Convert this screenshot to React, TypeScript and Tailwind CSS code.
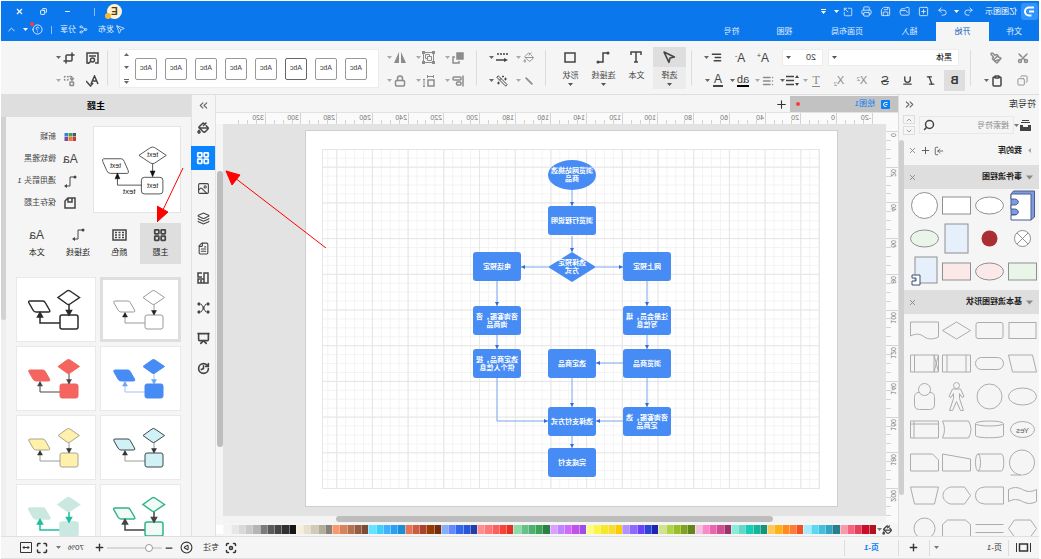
import React from 'react';
import {
  AlignLeft, AlignStartVertical, ChevronDown, ChevronUp, ChevronsLeft, ChevronsRight, CirclePlay, Clipboard,
  Copy, Crop, FileText, Focus, FolderOpen, HelpCircle, History, Image, Italic, Layers, LayoutGrid,
  List, Lock, LogIn, Maximize, Minus, Navigation, Paintbrush, PaintBucket, Plus, Presentation, Printer, Redo2,
  Replace, Save, Scissors, Search, Send, Share2, SquareArrowOutUpRight, SquarePlus, Underline, Undo2, Wand2, X,
} from 'lucide-react';

const swatches = [
  '#b0121f', '#cc0c2c', '#e83e5e', '#f46480', '#f79bab', '#24808f', '#35a5bf', '#3ec0de', '#5bd8f0', '#a5ecff',
  '#f65022', '#fc7d33', '#ff8d1d', '#feb318', '#ffc85a', '#13947f', '#14b59b', '#17ccb2', '#63d8c6', '#86eddb',
  '#a03068', '#cf5093', '#ea66ad', '#fb88cb', '#f2c2e0', '#62861a', '#7da321', '#9abf25', '#b2d247', '#d2e38f',
  '#1d25b5', '#2c42da', '#6b41fa', '#8e69fb', '#ae93fb', '#fccb00', '#fbdc2c', '#f4e828', '#faf546', '#fcfd86',
  '#9b4fe8', '#c450ea', '#cf6bfa', '#bd85ff', '#dba0ff', '#2c8044', '#3aa454', '#4cb074', '#66c088', '#8fdcab',
  '#e53124', '#fb4335', '#fb5f5f', '#fe7878', '#ff8f8f', '#1e3fa8', '#2a55d8', '#3068f0', '#6489ff', '#84aef8',
  '#762c06', '#963b04', '#a9432c', '#cf5c3e', '#e4775a', '#1a8ed8', '#2d9ef5', '#40b0ff', '#3cd0ff', '#66e4ff',
  '#7c4c34', '#965c42', '#b4724e', '#d9835a', '#f49a6c', '#8b7f77', '#b2ac9a', '#cfcbb8', '#e6e0cf', '#f5efdc',
  '#161616', '#303030', '#444444', '#5a5a5a', '#7b7b7b', '#b5b5b5', '#c9c9c9', '#d9d9d9', '#e7e7e7', '#f4f4f4', '#ffffff',
];

const nodes = [
  { text: '浏览行程说明', x: 241, y: 75 },
  { text: '网上预定', x: 166, y: 121 },
  { text: '电话预定', x: 316, y: 121 },
  { text: '注册会员，填写信息', x: 166, y: 175 },
  { text: '咨询客服，咨询商品', x: 316, y: 175 },
  { text: '浏览商品', x: 166, y: 218 },
  { text: '选定商品', x: 241, y: 218 },
  { text: '选定商品，提供个人信息', x: 316, y: 218 },
  { text: '咨询客服，选定商品', x: 166, y: 276 },
  { text: '选择支付方式', x: 241, y: 276 },
  { text: '完成支付', x: 241, y: 317 },
];

const edges = [
  'M265 59V75', 'M265 105V121', 'M241 136H214', 'M289 136H316', 'M190 150V175', 'M340 150V175', 'M190 204V218',
  'M340 204V218', 'M214 232H241', 'M190 247V276', 'M265 247V276', 'M214 290H241', 'M340 247V290H289', 'M265 305V317',
];

const themes = [
  { fill: '#ffffff', stroke: '#9a9a9a', line: '#9a9a9a', head: '#222222', width: 1 },
  { fill: '#ffffff', stroke: '#2b2b2b', line: '#2b2b2b', head: '#2b2b2b', width: 2 },
  { fill: '#478cf4', stroke: '#478cf4', line: '#a3c3f8', head: '#6ea3f5', width: 1 },
  { fill: '#f4655f', stroke: '#f4655f', line: '#444444', head: '#444444', width: 1 },
  { fill: '#d0f1f6', stroke: '#3d474a', line: '#9a9a9a', head: '#333333', width: 1 },
  { fill: '#fff0ab', stroke: '#a8a596', line: '#9a9a9a', head: '#333333', width: 1 },
  { fill: '#f1faf7', stroke: '#2db489', line: '#444444', head: '#444444', width: 2 },
  { fill: '#cbe8e0', stroke: '#cbe8e0', line: '#1dbf9c', head: '#1dbf9c', width: 2 },
];

function Caret({ className = 'text-[#777]' }: { className?: string }) {
  return (
    <svg className={`shrink-0 ${className}`} width="5" height="3" viewBox="0 0 5 3" fill="currentColor">
      <path d="M0 0h5L2.5 3z" />
    </svg>
  );
}

function Separator() {
  return <div className="w-px h-9 mt-1 bg-[#dcdcdc] shrink-0" />;
}

type ToolProps = { label: string; caret?: boolean; dim?: boolean; className?: string; children: React.ReactNode };

function Tool({ label, caret, dim, className = 'w-[23px]', children }: ToolProps) {
  return (
    <button aria-label={label} className={`h-[23px] flex items-center shrink-0 ${dim ? 'text-[#8c8c8c]' : 'text-[#444]'} ${className}`}>
      <span className="w-4 flex justify-center shrink-0">{children}</span>
      {caret && <Caret className={dim ? 'text-[#aaa]' : 'text-[#666]'} />}
    </button>
  );
}

function BigTool({ label, active, caret = true, children }: { label: string; active?: boolean; caret?: boolean; children: React.ReactNode }) {
  return (
    <button className={`w-[33px] h-[42px] mt-px flex flex-col items-center shrink-0 text-[#444] ${active ? 'bg-[#ececec]' : ''}`}>
      <span className={`w-full h-5 flex items-center justify-center ${active ? 'bg-[#dedede]' : ''}`}>{children}</span>
      <span className="text-[8px] leading-[15px] mt-px">{label}</span>
      {caret && <Caret className="text-[#555]" />}
    </button>
  );
}

function Connector() {
  return (
    <svg width="14" height="13" viewBox="0 0 14 13" fill="none" stroke="currentColor">
      <path d="M2 2h5v9h3" />
      <path d="M10 9l3 2-3 2z" fill="currentColor" stroke="none" />
      <circle cx="2" cy="2" r="1.5" fill="currentColor" stroke="none" />
    </svg>
  );
}

function Palette() {
  return (
    <svg width="15" height="12" viewBox="0 0 15 12" fill="none" stroke="currentColor" strokeWidth="1.5">
      <path d="M1 1h13v10H1z" />
      <path d="M3 3.500h2M6.500 3.500h2M10 3.500h2M3 6h2M6.500 6h2M10 6h2M3 8.500h2M6.500 8.500h2M10 8.500h2" />
    </svg>
  );
}

function TitleBar() {
  return (
    <div className="h-[21px] flex items-center text-[#d6e8ff] pr-1">
      <svg className="ml-px mr-1" width="17" height="17" viewBox="0 0 17 17">
        <rect width="17" height="17" rx="3" fill="#2f93ff" />
        <path d="M4 4.500h5a4 4 0 0 1 0 8H6.500M4 8.500h5" fill="none" stroke="#fff" strokeWidth="2" />
      </svg>
      <span className="text-[8px] text-white w-[43px]">亿图图示</span>
      <button aria-label="撤销" className="flex items-center w-[26px] gap-1"><Undo2 size={11} /><Caret className="text-white" /></button>
      <button aria-label="恢复" className="w-[19px]"><Redo2 size={11} /></button>
      <button aria-label="新建" className="w-[19px]"><SquarePlus size={11} /></button>
      <button aria-label="打开" className="w-[19px]"><FolderOpen size={11} /></button>
      <button aria-label="保存" className="w-[19px]"><Save size={11} /></button>
      <button aria-label="打印" className="w-[19px]"><Printer size={11} /></button>
      <button aria-label="导出" className="flex items-center gap-1 w-[27px]"><SquareArrowOutUpRight size={10} /><Caret className="text-white" /></button>
      <button aria-label="更多" className="flex flex-col items-center gap-px"><span className="w-[5px] h-px bg-white" /><Caret className="text-white" /></button>
      <div className="flex-1" />
      <div className="relative size-[15px] mr-1 rounded-full bg-[#fff3d0] text-[#5a3a10] text-[10px] leading-[15px] text-center font-bold">
        E
        <span className="absolute -right-0.5 bottom-0 size-[6px] rounded-full bg-[#f7b733]" />
      </div>
      <span className="w-px h-2 bg-[#8abfff] ml-2" />
      <button aria-label="最小化" className="w-[24px] ml-3.5 flex justify-center text-white"><Minus size={7} strokeWidth={3} /></button>
      <button aria-label="还原" className="w-[24px] flex justify-center text-white"><Copy size={7} strokeWidth={3} /></button>
      <button aria-label="关闭" className="w-[24px] mr-[3px] flex justify-center text-white"><X size={9} strokeWidth={3} /></button>
    </div>
  );
}

function Menu() {
  return (
    <div className="h-[19px] flex text-[8px] text-[#e4f0ff]">
      <button className="w-[50px]">文件</button>
      <button className="w-[53px] bg-[#f5f5f5] text-[#0b5fc0]">开始</button>
      <button className="w-[53px]">插入</button>
      <button className="w-[72px]">页面布局</button>
      <button className="w-[53px]">视图</button>
      <button className="w-[53px]">符号</button>
      <div className="flex-1" />
      <div className="flex items-center pb-1">
        <button className="flex items-center gap-[2px]"><Send size={9} />发布</button>
        <button className="flex items-center gap-[3px] ml-2.5"><Share2 size={9} />分享</button>
        <span className="w-px h-2 bg-[#8abfff] ml-2" />
        <button aria-label="帮助" className="relative flex items-center gap-1 ml-2">
          <HelpCircle size={11} />
          <span className="absolute left-[9px] -top-0.5 size-1 rounded-full bg-[#ff3b3b]" />
          <Caret className="text-white" />
        </button>
        <button aria-label="折叠功能区" className="ml-1.5 mr-[5px]"><ChevronUp size={11} /></button>
      </div>
    </div>
  );
}

function Ribbon() {
  return (
    <div className="h-[54px] pt-[5px] bg-[#f5f5f5] border-b border-[#dedede] flex text-[9px]">
      <div className="w-[68px] pl-2 shrink-0">
        <div className="flex">
          <Tool label="剪切" dim className="w-[27px]"><Scissors size={12} className="-rotate-90" strokeWidth={3} /></Tool>
          <Tool label="格式刷" dim><Paintbrush size={12} strokeWidth={3} /></Tool>
        </div>
        <div className="flex">
          <Tool label="复制" dim className="w-[26px]"><Copy size={11} /></Tool>
          <Tool label="粘贴" caret><Clipboard size={12} strokeWidth={3} /></Tool>
        </div>
      </div>
      <Separator />
      <div className="w-[271px] pl-[5px] shrink-0">
        <div className="flex h-[23px] items-center">
          <div className="relative ml-1.5 flex items-center">
            <select aria-label="字体" className="appearance-none w-[131px] h-[17px] pl-1.5 bg-white border border-[#ececec] text-[8px] text-black">
              <option>黑体</option>
            </select>
            <Caret className="absolute right-1 text-[#555]" />
          </div>
          <div className="relative ml-[5px] mr-[11px] flex items-center">
            <select aria-label="字号" className="appearance-none w-[41px] h-[17px] pl-1.5 bg-white border border-[#ececec] text-[9px] text-[#444]">
              <option>20</option>
            </select>
            <Caret className="absolute right-1 text-[#555]" />
          </div>
          <Tool label="增大字号"><span className="text-[12px] leading-none">A<sup className="text-[7px]">+</sup></span></Tool>
          <Tool label="减小字号"><span className="text-[12px] leading-none">A<sup className="text-[7px]">-</sup></span></Tool>
          <Tool label="对齐" caret><AlignLeft size={11} strokeWidth={3} /></Tool>
        </div>
        <div className="flex">
          <button aria-label="加粗" className="w-[21px] h-[21px] mt-px mr-[5px] bg-[#dedede] text-[11px] leading-[21px] font-bold text-[#333]">B</button>
          <Tool label="斜体"><Italic size={11} strokeWidth={3} /></Tool>
          <Tool label="下划线"><Underline size={11} strokeWidth={3} /></Tool>
          <Tool label="删除线"><span className="text-[12px] leading-none line-through">S</span></Tool>
          <Tool label="上标" dim><span className="text-[11px] leading-none">X<sup className="text-[6px]">2</sup></span></Tool>
          <Tool label="下标" dim><span className="text-[11px] leading-none">X<sub className="text-[6px]">2</sub></span></Tool>
          <Tool label="文本效果" dim caret><span className="font-['Liberation_Serif',serif] text-[12px] leading-none border-b border-current">T</span></Tool>
          <Tool label="行距" caret className="w-[25px]">
            <svg width="13" height="11" viewBox="0 0 13 11" stroke="currentColor" fill="currentColor">
              <path d="M5 1.500h8M5 5.500h8M5 9.500h8" strokeWidth="1.500" />
              <path d="M2 0l2 3H0zM2 11l2-3H0z" stroke="none" />
            </svg>
          </Tool>
          <Tool label="项目符号" dim caret className="w-[25px]"><List size={12} strokeWidth={3} /></Tool>
          <Tool label="突出显示" caret className="w-[25px]"><span className="text-[11px] leading-[11px] border-b-2 border-black">ab</span></Tool>
          <Tool label="字体颜色" caret><span className="text-[12px] leading-[11px] border-b-2 border-[#444] px-px">A</span></Tool>
        </div>
      </div>
      <div className="w-[7px] shrink-0" />
      <Separator />
      <div className="w-[145px] pl-[5px] flex shrink-0">
        <BigTool label="选择" active><Navigation size={13} strokeWidth={3} /></BigTool>
        <BigTool label="文本" caret={false}>
          <svg width="12" height="12" viewBox="0 0 12 12" fill="none" stroke="currentColor" strokeWidth="1.5"><path d="M1 4V1h10v3M6 1v10M4 11h4" /></svg>
        </BigTool>
        <BigTool label="连接线">
          <svg width="14" height="13" viewBox="0 0 14 13" fill="none" stroke="currentColor" strokeWidth="1.5">
            <path d="M2 2h5v9h4" />
            <circle cx="2" cy="2" r="1.5" fill="currentColor" stroke="none" />
            <circle cx="12" cy="11" r="1.5" fill="currentColor" stroke="none" />
          </svg>
        </BigTool>
        <BigTool label="形状">
          <svg width="12" height="11" viewBox="0 0 12 11" fill="none" stroke="currentColor" strokeWidth="1.5"><path d="M1 1h10v9H1z" /></svg>
        </BigTool>
      </div>
      <Separator />
      <div className="w-[68px] pl-2 shrink-0">
        <div className="flex">
          <Tool label="填充" dim caret className="w-[27px]"><PaintBucket size={11} /></Tool>
          <Tool label="线型" caret>
            <svg width="12" height="11" viewBox="0 0 12 11" stroke="currentColor" strokeWidth="1.500">
              <path d="M0 2h12" strokeDasharray="2 1" /><path d="M3 8h9" /><path d="M4 6L0 8l4 2z" fill="currentColor" stroke="none" />
            </svg>
          </Tool>
        </div>
        <div className="flex">
          <Tool label="线条" dim caret className="w-[27px]"><Minus size={14} strokeWidth={3} className="-rotate-45" /></Tool>
          <Tool label="快速样式" caret><Wand2 size={12} /></Tool>
        </div>
      </div>
      <Separator />
      <div className="w-[97px] pl-2.5 shrink-0">
        <div className="flex">
          <Tool label="排列" dim caret className="w-[29px]">
            <svg width="12" height="12" viewBox="0 0 12 12" fill="none" stroke="currentColor" strokeWidth="1.500">
              <path d="M1 1h6v6H1z" fill="currentColor" /><path d="M9 5h2v6H5V9" />
            </svg>
          </Tool>
          <Tool label="组合" dim caret className="w-[29px]">
            <svg width="13" height="13" viewBox="0 0 13 13" fill="none" stroke="currentColor">
              <path d="M1.500 1.500h10v10h-10z" /><path d="M3.500 5.500h4v4h-4zM5.500 5.500v-2h4v4h-2" />
              <path d="M0 0h3v3H0zM10 0h3v3h-3zM0 10h3v3H0zM10 10h3v3h-3z" fill="currentColor" stroke="none" />
            </svg>
          </Tool>
          <Tool label="翻转" dim caret>
            <svg width="12" height="11" viewBox="0 0 12 11" fill="currentColor"><path d="M0 11L5 0v11zM7 0l5 11H7z" /></svg>
          </Tool>
        </div>
        <div className="flex">
          <Tool label="对齐形状" dim caret className="w-[29px]"><AlignStartVertical size={12} strokeWidth={3} /></Tool>
          <Tool label="大小" dim caret className="w-[29px]">
            <svg width="12" height="12" viewBox="0 0 12 12" fill="none" stroke="currentColor">
              <path d="M1 1.500h7M1.500 0v3M7.500 0v3M11 4.500v7M10 4.500h2M10 11.500h2" /><path d="M1 5h6v6H1z" strokeWidth="1.500" />
            </svg>
          </Tool>
          <Tool label="锁定" dim caret><Lock size={12} strokeWidth={3} /></Tool>
        </div>
      </div>
      <div className="flex-1 min-w-0 h-[39px] mt-[3px] bg-white border border-[#ececec] flex items-center pl-[11px]">
        <div className="flex-1 min-w-0 flex gap-2 overflow-hidden">
          {[0, 1, 2, 3, 4, 5, 6, 7].map((n) => (
            <button key={n} className={`size-[22px] rounded-xs border text-[7px] text-[#444] shrink-0 ${n === 2 ? 'border-[#666]' : 'border-[#999]'}`}>Abc</button>
          ))}
        </div>
        <div className="flex flex-col items-center gap-2.5 mr-1">
          <Caret className="rotate-180 text-[#666]" />
          <Caret className="text-[#666]" />
          <span className="flex flex-col gap-px"><span className="w-[5px] h-px bg-[#666]" /><Caret className="text-[#666]" /></span>
        </div>
      </div>
      <div className="w-[11px] shrink-0" />
      <Separator />
      <div className="w-[106px] pl-1.5 shrink-0">
        <div className="flex">
          <Tool label="查找" className="w-[24px]">
            <svg width="13" height="12" viewBox="0 0 13 12" fill="none" stroke="currentColor" strokeWidth="1.5">
              <path d="M4 11H1V1h11v10h-2M3 4h7" /><circle cx="6.5" cy="8" r="2" /><path d="M8 9l3 3" />
            </svg>
          </Tool>
          <Tool label="裁剪" caret><Crop size={12} strokeWidth={3} /></Tool>
        </div>
        <div className="flex">
          <Tool label="拼写检查" className="w-[24px]">
            <svg width="13" height="12" viewBox="0 0 13 12" fill="none" stroke="currentColor" strokeWidth="1.5">
              <path d="M1 9L4.500 1 8 9M2.500 6h4M6 8l2.500 3L13 6" />
            </svg>
          </Tool>
          <Tool label="替换形状" dim caret><Replace size={12} strokeWidth={3} /></Tool>
        </div>
      </div>
    </div>
  );
}

const eventShapes = [
  <><path d="M-8.500 14.500l-3.500-3v-26H9l2.500 3V9h-8z" fill="#7d9be0" stroke="#4a5c8c" /><path d="M-8.500-11.500h20v5H8c-5 0-5 6 0 6h3.500v4H8c-5 0-5 6 0 6h3.500v5h-20z" fill="#fff" stroke="#4a5c8c" /></>,
  <ellipse rx="14" ry="8.500" fill="#fff" />,
  <rect x="-14" y="-8.500" width="28" height="17" fill="#fff" />,
  <circle r="13" fill="#fff" />,
  <><circle r="8" fill="#fff" /><path d="M-5.500-5.500l11 11M5.500-5.500l-11 11" /></>,
  <circle r="8" fill="#aa2f32" stroke="none" />,
  <rect x="-11.500" y="-14.500" width="23" height="29" fill="#e5f0fc" />,
  <ellipse rx="14" ry="8.500" fill="#e9f5e9" />,
  <rect x="-14" y="-8.500" width="28" height="17" fill="#e9f5e9" />,
  <ellipse rx="14" ry="8.500" fill="#fbe8e8" />,
  <rect x="-14" y="-8.500" width="28" height="17" fill="#fbe8e8" />,
  <><rect x="-12.500" y="-14.500" width="22" height="26" fill="#e5f0fc" /><path d="M4.500 3.500h8v3h-4v3h4v4h-8z" fill="#fff" stroke="#3c4f78" /></>,
];

const basicShapes = [
  <rect x="-13.500" y="-8" width="27" height="16" />,
  <rect x="-13.500" y="-8" width="27" height="16" rx="2" />,
  <path d="M-14 0L0-8.500 14 0 0 8.500z" />,
  <path d="M-14-8.500h28v14c-6-3-10-2-14 1s-10 2-14 0z" />,
  <path d="M-10-8.500h24l-4 17h-24z" />,
  <rect x="-14" y="-6" width="28" height="12" rx="6" />,
  <path d="M-14-8.500h28v17h-28zM-9.500-8.500v17M9.500-8.500v17" />,
  <path d="M-14-8.500h28v17h-28zM-9.500-8.500v17M10-8.500v17M-14-8.500l4.500 17M-9.500-8.500l-4.500 17" />,
  <ellipse rx="14" ry="8.500" />,
  <circle r="12.500" />,
  <><circle cy="-11" r="3" /><path d="M-4-7.500h8l3.500 7.500-2 1L3-3v5l4 12H4L0 5l-4 9h-3l4-12v-5l-2.500 4-2-1z" /></>,
  <><circle cy="-7" r="6" /><path d="M-5-4c-4 0-5 2-5 5v7q0 5 5 5H5q5 0 5-5V1c0-3-1-5-5-5" /></>,
  <><ellipse rx="12" ry="8" /><text y="3" textAnchor="middle" fontSize="8" fill="#666" stroke="none">Yes</text></>,
  <><ellipse cy="-6" rx="14" ry="2.500" /><path d="M-14-6V6c0 3 28 3 28 0V-6" /></>,
  <path d="M-12-8.500h26q-4 8.500 0 17h-26q-5-8.500 0-17z" />,
  <path d="M-14-8.500h28v17h-28zM-14-5.500h28M10.500-8.500v17" />,
  <path d="M0 12.500A12.500 12.500 0 1 1 1 12.500H12" />,
  <><path d="M11.500-8.500H-12c-3 0-3 17 0 17h23.500" /><ellipse cx="11.500" rx="2.500" ry="8.500" /></>,
  <path d="M-14-3.500l28-5v17h-28z" />,
  <path d="M-8-8.500h22v17h-28v-11z" />,
  <path d="M-14-6q7 4 14 0t14 0V6q-7-4-14 0T-14 6z" />,
  <path d="M-14-8.500H5q9 1 9 8.500T5 8.500h-19z" />,
  <path d="M-14 0l6-8.500H6c10 3 10 14 0 17H-8z" />,
  <path d="M-14-8.500h28l-4 17h-20z" />,
  <path d="M-14 0l6-8.500H8L14 0 8 8.500H-8z" />,
  <path d="M-14-4h28M-14 4h28" />,
  <path d="M-14 8.500V-4l5-4.500H9L14-4V8.500z" />,
  <circle r="10.500" />,
];

function ShapeGrid({ shapes, stroke }: { shapes: React.ReactNode[]; stroke: string }) {
  return (
    <div className="grid grid-cols-4 pr-1">
      {shapes.map((shape, i) => (
        <svg key={i} className="w-[33px] h-[33px]" viewBox="-16.5 -16.5 33 33" fill="none" stroke={stroke}>{shape}</svg>
      ))}
    </div>
  );
}

function LibraryHeader({ title }: { title: string }) {
  return (
    <div className="h-6 shrink-0 bg-[#dedede] flex items-center pl-1.5 text-[8px] font-bold text-[#222]">
      <Caret className="w-[7px] h-[5px] text-[#888]" />
      <span className="ml-1 flex-1">{title}</span>
      <button aria-label={`关闭${title}`} className="mr-1 text-[#777]"><X size={9} /></button>
    </div>
  );
}

function SymbolPanel() {
  return (
    <aside className="w-[141px] shrink-0 flex flex-col bg-[#f5f5f5] border-r border-[#dedede] overflow-hidden">
      <div className="h-[19px] shrink-0 flex items-center justify-between pl-[3px] pr-1 text-[9px] text-[#333]">
        符号库
        <button aria-label="收起符号库" className="text-[#666]"><ChevronsLeft size={13} /></button>
      </div>
      <div className="h-[22px] shrink-0 flex items-center pl-2 text-[#444]">
        <button aria-label="符号分类" className="flex items-center gap-px w-[17px]">
          <svg width="11" height="11" viewBox="0 0 11 11" fill="currentColor"><path d="M2 0h7v1H2zM1 2h9v1H1zM0 5h3v2h5V5h3v6H0z" /></svg>
          <Caret />
        </button>
        <div className="relative flex items-center">
          <input aria-label="搜索符号" placeholder="搜索符号" className="w-[95px] h-[18px] border border-[#e8e8e8] pl-1 text-[8px] placeholder:text-[#888]" />
          <Search size={12} strokeWidth={3} className="absolute right-1" />
        </div>
        <div className="flex flex-col gap-0.5 ml-1 text-[#777]">
          <button aria-label="上一个" className="w-3 h-[9px] border border-[#ddd] flex items-center justify-center"><ChevronUp size={8} /></button>
          <button aria-label="下一个" className="w-3 h-[9px] border border-[#ddd] flex items-center justify-center"><ChevronDown size={8} /></button>
        </div>
      </div>
      <div className="flex-1 min-h-0 flex overflow-hidden">
        <div className="w-[135px] shrink-0">
          <div className="h-[29px] flex items-center pl-[7px] pr-1 gap-[3px] text-[8px] font-bold text-[#222]">
            <Caret className="-rotate-90 text-[#aaa]" />
            <span className="ml-0.5 flex-1">我的库</span>
            <button aria-label="导入" className="text-[#555]"><LogIn size={10} /></button>
            <button aria-label="新建库" className="text-[#555]"><Plus size={11} /></button>
            <button aria-label="关闭我的库" className="text-[#777]"><X size={9} /></button>
          </div>
          <LibraryHeader title="事件流程图" />
          <div className="pb-[2px]"><ShapeGrid shapes={eventShapes} stroke="#8f8f8f" /></div>
          <LibraryHeader title="基本流程图形状" />
          <ShapeGrid shapes={basicShapes} stroke="#acacac" />
        </div>
        <div className="w-[5px] h-[355px] mt-1 rounded-full bg-[#cfcfcf]" />
      </div>
    </aside>
  );
}

function Rulers({ vertical }: { vertical?: boolean }) {
  const unit = 35.7;
  const first = vertical ? 7 : 49;
  const count = vertical ? 11 : 17;
  return (
    <svg className={vertical ? 'w-3 h-full' : 'flex-1 h-full min-w-0'} stroke="#d4d4d4" fontSize="7">
      {Array.from({ length: (count + 1) * 4 }, (_, i) => {
        const at = Math.round(first - unit + (i * unit) / 4);
        const major = i % 4 === 0;
        return vertical
          ? <path key={i} d={`M${major ? 0 : 7} ${at}.5H12`} />
          : <path key={i} d={`M${at}.5 ${major ? 0 : 7}V12`} />;
      })}
      {Array.from({ length: count + 1 }, (_, i) => {
        const at = Math.round(first + (i - 1) * unit);
        const value = (i - 1) * 20;
        if (vertical && value < 0) return null;
        return vertical
          ? <text key={i} transform={`translate(7 ${at + 2}) rotate(-90)`} textAnchor="end" fill="#777" stroke="none">{value}</text>
          : <text key={i} x={at + 2} y="7" fill="#777" stroke="none">{value}</text>;
      })}
    </svg>
  );
}

function Flowchart() {
  const nodeText = 'absolute flex items-center justify-center text-center text-[7px] leading-[8px] font-bold text-white';
  return (
    <div className="relative w-[531px] h-[375px] shrink-0 bg-white ring-1 ring-[#cfcfcf]">
      <svg className="absolute inset-0" width="531" height="375">
        <defs>
          <pattern id="minor" width="8.925" height="8.925" patternUnits="userSpaceOnUse"><path d="M0 .5h9M.5 0v9" stroke="#f3f3f3" /></pattern>
          <pattern id="major" width="35.7" height="35.7" patternUnits="userSpaceOnUse"><path d="M0 .5h36M.5 0v36" stroke="#e6e6e6" fill="none" /></pattern>
          <marker id="tip" viewBox="0 0 4 4" refX="4" refY="2" markerWidth="4" markerHeight="4" orient="auto"><path d="M0 0l4 2-4 2z" fill="#2e6fd6" /></marker>
        </defs>
        <rect x="17" y="18" width="497" height="339" fill="url(#minor)" />
        <rect x="17.500" y="18.500" width="497" height="339" fill="url(#major)" stroke="#e6e6e6" />
        {edges.map((d) => <path key={d} d={d} fill="none" stroke="#7ba5ea" markerEnd="url(#tip)" />)}
        <path d="M265 121l24 15-24 15-24-15z" fill="#478cf4" />
      </svg>
      <div className={`${nodeText} left-[241px] top-[29px] w-12 h-[30px] rounded-[50%] bg-[#478cf4] px-[2px]`}>浏览网站挑选商品</div>
      <div className={`${nodeText} left-[241px] top-[121px] w-12 h-[30px] px-[10px]`}>选择预定方式</div>
      {nodes.map((n, i) => (
        <div key={i} className={`${nodeText} w-12 h-[29px] px-[2px] rounded-[3px] bg-[#478cf4]`} style={{ left: n.x, top: n.y }}>{n.text}</div>
      ))}
    </div>
  );
}

function Workspace() {
  return (
    <main className="flex-1 min-w-0 flex flex-col bg-[#f5f5f5]">
      <div className="h-4 shrink-0 flex items-center mt-px">
        <div className="w-[108px] h-4 bg-[#c2c2c2] flex items-center pl-2 pr-1.5 text-[8px] text-[#0b80f5]">
          <svg width="9" height="9" viewBox="0 0 9 9">
            <rect width="9" height="9" rx="1" fill="#0b80f5" />
            <path d="M2.500 2.500h2a2 2 0 0 1 0 4h-1M2.500 4.500h2" fill="none" stroke="#fff" />
          </svg>
          <span className="ml-1.5 flex-1">绘图1</span>
          <span className="size-1 rounded-full bg-[#ff3b3b]" />
        </div>
        <button aria-label="新建绘图" className="ml-0.5 text-[#333]"><Plus size={13} /></button>
      </div>
      <div className="h-3 shrink-0 flex bg-[#fafafa] border-t border-[#e2e2e2] pr-[7px]">
        <div className="w-3" />
        <Rulers />
      </div>
      <div className="flex-1 min-h-0 flex">
        <div className="w-3 shrink-0 bg-[#fafafa] overflow-hidden"><Rulers vertical /></div>
        <div className="flex-1 min-w-0 flex flex-col">
          <div className="flex-1 min-h-0 bg-[#e3e3e3] overflow-hidden pl-[49px] pt-[7px]"><Flowchart /></div>
          <div className="h-[7px] shrink-0 bg-[#f3f3f3]"><div className="ml-[17%] mr-[17%] h-1.5 rounded-full bg-[#bdbdbd]" /></div>
        </div>
        <div className="w-[7px] shrink-0 bg-[#f5f5f5] pt-[47px]"><div className="w-1.5 h-[276px] rounded-full bg-[#bdbdbd]" /></div>
      </div>
      <div className="h-[13px] shrink-0 flex items-center pl-1.5">
        <button aria-label="填充颜色" className="flex items-center w-4 text-[#444]"><PaintBucket size={10} strokeWidth={3} /><Caret /></button>
        <div className="flex-1 flex h-[9px]">
          {swatches.map((c) => <span key={c} className="flex-1 border-r border-white/40" style={{ backgroundColor: c }} />)}
        </div>
      </div>
    </main>
  );
}

function Rail() {
  const icons = [
    { label: '填充', icon: <PaintBucket size={12} strokeWidth={3} /> },
    { label: '主题', icon: <LayoutGrid size={14} strokeWidth={3} /> },
    { label: '图片', icon: <Image size={13} strokeWidth={2} /> },
    { label: '图层', icon: <Layers size={13} strokeWidth={2} /> },
    { label: '页面', icon: <FileText size={13} strokeWidth={2} /> },
    {
      label: '容器',
      icon: (
        <svg width="12" height="12" viewBox="0 0 12 12" fill="none" stroke="currentColor" strokeWidth="1.5">
          <path d="M1 4V1h4v3M1 4v7h10V7H5V4M7 1h4v4H7M5 7v4M8 8v3" />
        </svg>
      ),
    },
    {
      label: '关系',
      icon: (
        <svg width="13" height="12" viewBox="0 0 13 12" fill="currentColor" stroke="currentColor">
          <path d="M4 2l2.500 3.500L9 2M4 10l2.500-3.500L9 10" fill="none" />
          <path d="M1 1h2v2H1zM10 1h2v2h-2zM1 9h2v2H1zM10 9h2v2h-2zM6 5h1v2H6z" />
        </svg>
      ),
    },
    { label: '演示', icon: <Presentation size={13} strokeWidth={3} /> },
    { label: '历史', icon: <History size={13} strokeWidth={3} /> },
  ];
  return (
    <nav className="w-[25px] shrink-0 bg-[#f5f5f5] border-x border-[#e2e2e2] flex flex-col items-center text-[#444]">
      <button aria-label="收起面板" className="h-[21px] w-full flex items-center justify-center shrink-0 text-[#666]"><ChevronsRight size={13} /></button>
      <div className="flex flex-col gap-1.5">
        {icons.map((item) => (
          <button key={item.label} aria-label={item.label} className={`w-6 h-6 flex items-center justify-center ${item.label === '主题' ? 'bg-[#0a84ff] text-white' : ''}`}>{item.icon}</button>
        ))}
      </div>
    </nav>
  );
}

function ThemePreview() {
  return (
    <svg className="w-[88px] h-[87px] bg-white border border-[#e4e4e4]" viewBox="0 0 88 87" fill="none" stroke="#555" fontSize="7">
      <path d="M14 29l12-8q2-1 4 0l12 8-12 8q-2 1-4 0z" />
      <rect x="17.5" y="51.5" width="22" height="17" rx="3" />
      <path d="M60 32.500h18q2 0 1 3l-4 9q-1 3-4 3H54q-2 0-1-3l4-9q1-3 3-3z" />
      <path d="M28 37v9M39 59.500h25V53" />
      <path d="M25.500 45h5L28 51zM61.500 53h5L64 47z" fill="#111" stroke="#111" strokeWidth="0.5" />
      <g fill="#222" stroke="none" textAnchor="middle">
        <text x="28" y="31">text</text>
        <text x="28" y="62">text</text>
        <text x="66" y="42">text</text>
        <text x="52" y="69" fontSize="8">text</text>
      </g>
    </svg>
  );
}

function ThemeCard({ theme, active }: { theme: (typeof themes)[number]; active: boolean }) {
  return (
    <button aria-label="主题样式" className={`h-[65px] bg-white ${active ? 'ring-3 ring-inset ring-[#dedede]' : 'ring-1 ring-inset ring-[#e9e9e9]'}`}>
      <svg className="w-[80px] h-[65px] mx-auto" viewBox="0 0 80 65" fill={theme.fill} stroke={theme.stroke} strokeWidth={theme.width === 2 ? 1.5 : 1}>
        <path d="M27 27v11M36 46h20V36" fill="none" stroke={theme.line} />
        <path d="M16.500 20.500L26 14q1.500-1 3 0l9 6.500-9 6.500q-1.500 1-3 0z" />
        <rect x="18" y="38" width="18" height="14" rx="2" />
        <path d="M53 24h13q2 0 1 2l-4 7q-1 2-3 2H47.500q-2 0-1-2l4-7q1-2 2.500-2z" />
        <path d="M24.500 33.500h5L27 38zM53.500 40h5L56 35.500z" fill={theme.head} stroke={theme.head} strokeWidth={theme.width - 0.5} />
      </svg>
    </button>
  );
}

function ThemePanel() {
  const options = [
    {
      label: '新颖',
      icon: (
        <svg width="12" height="8" viewBox="0 0 12 8">
          <path d="M0 0h3.500v3.500H0z" fill="#555" /><path d="M4 0h3.500v3.500H4z" fill="#3aa757" /><path d="M8 0h3.500v3.500H8z" fill="#3d7de0" />
          <path d="M0 4h3.500v4H0z" fill="#c93a3a" /><path d="M4 4h3.500v4H4z" fill="#ee7a2b" /><path d="M8 4h3.500v4H8z" fill="#7a4e93" />
        </svg>
      ),
    },
    { label: '微软雅黑', icon: <span className="text-[12px]">Aa</span> },
    { label: '通用箭头 1', icon: <Connector /> },
    {
      label: '保存主题',
      icon: (
        <svg width="12" height="12" viewBox="0 0 12 12" fill="none" stroke="currentColor" strokeWidth="1.5">
          <path d="M1 1h7l3 3v7H1zM4 1v4h4V1" />
        </svg>
      ),
    },
  ];
  const tabs = [
    { label: '主题', icon: <LayoutGrid size={14} strokeWidth={3} /> },
    { label: '颜色', icon: <Palette /> },
    { label: '连接线', icon: <Connector /> },
    { label: '文本', icon: <span className="text-[12px] leading-none">Aa</span> },
  ];
  return (
    <aside className="w-[190px] shrink-0 flex flex-col bg-[#f5f5f5] overflow-hidden">
      <h2 className="h-[22px] shrink-0 bg-[#dedede] text-center text-[9px] leading-[22px] font-bold">主题</h2>
      <div className="flex-1 min-h-0 flex">
        <div className="flex-1 pl-2.5 pr-2.5 pt-[9px] min-w-0">
          <div className="flex">
            <ThemePreview />
            <div className="flex flex-col ml-3.5 text-[8px] text-[#444]">
              {options.map((o) => (
                <button key={o.label} className="h-[22px] flex items-center whitespace-nowrap">
                  <span className="w-[17px] flex justify-center mr-1.5 text-[#444]">{o.icon}</span>{o.label}
                </button>
              ))}
            </div>
          </div>
          <div className="grid grid-cols-4 h-[41px] mt-[9px] mb-[13px] text-[8px] text-[#222]">
            {tabs.map((t) => (
              <button key={t.label} className={`flex flex-col items-center pt-1 ${t.label === '主题' ? 'bg-[#dedede]' : ''}`}>
                <span className="h-[15px] flex items-center text-[#444]">{t.icon}</span>
                <span className="mt-[5px] leading-3">{t.label}</span>
              </button>
            ))}
          </div>
          <div className="grid grid-cols-2 gap-1">
            {themes.map((t, i) => <ThemeCard key={i} theme={t} active={i === 0} />)}
          </div>
        </div>
        <div className="w-[5px] shrink-0 bg-[#efefef]"><div className="h-[203px] rounded-b-full bg-[#d2d2d2]" /></div>
      </div>
    </aside>
  );
}

function StatusBar() {
  return (
    <footer className="h-[23px] shrink-0 flex items-center bg-[#f5f5f5] border-y border-[#e0e0e0] text-[8px] text-[#333] pl-2">
      <button aria-label="页面缩略图" className="w-[22px]">
        <svg width="15" height="9" viewBox="0 0 15 9" fill="none" stroke="currentColor"><path d="M.5 0v9M14.500 0v9" /><path d="M3.500 1h8v7h-8z" strokeWidth="1.5" /></svg>
      </button>
      <span className="w-px h-4 bg-[#ddd]" />
      <button className="flex items-center justify-between w-[78px] pl-1.5 pr-1">页-1<Caret /></button>
      <span className="w-px h-4 bg-[#ddd]" />
      <button aria-label="添加页面" className="w-[30px] flex justify-center"><Plus size={11} strokeWidth={3} /></button>
      <span className="w-px h-4 bg-[#ddd]" />
      <button className="w-[53px] text-[#0b80f5] font-bold">页-1</button>
      <span className="w-px h-4 bg-[#ddd]" />
      <div className="flex-1" />
      <button className="flex items-center gap-1.5 mr-2.5"><Focus size={12} strokeWidth={3} />专注</button>
      <button aria-label="播放"><CirclePlay size={13} /></button>
      <button aria-label="缩小" className="ml-1.5 mr-0.5"><Minus size={10} strokeWidth={3} /></button>
      <input type="range" aria-label="缩放" defaultValue={20} className="appearance-none w-[55px] h-0.5 bg-[#d8d8d8] [&::-webkit-slider-thumb]:appearance-none [&::-webkit-slider-thumb]:size-2 [&::-webkit-slider-thumb]:rounded-full [&::-webkit-slider-thumb]:bg-white [&::-webkit-slider-thumb]:border [&::-webkit-slider-thumb]:border-[#999]" />
      <button aria-label="放大" className="mx-0.5"><Plus size={11} strokeWidth={3} /></button>
      <button className="ml-2 flex items-center gap-[7px] w-[28px]">70%<Caret /></button>
      <button aria-label="全屏" className="ml-2"><Maximize size={12} strokeWidth={3} /></button>
      <button aria-label="适应宽度" className="ml-1 mr-[19px]">
        <svg width="12" height="11" viewBox="0 0 12 11" fill="none" stroke="currentColor"><path d="M.5.5h11v10H.5zM3 5.500h6M4.500 4L3 5.500 4.500 7M7.500 4L9 5.500 7.500 7" /></svg>
      </button>
    </footer>
  );
}

export default function App() {
  return (
    <div className="relative h-screen w-full -scale-x-100 flex flex-col overflow-hidden bg-white pt-px pl-0.5 pr-px font-['Liberation_Sans','Noto_Sans_CJK_SC',sans-serif]">
      <header className="shrink-0 bg-[#0a77ec]">
        <TitleBar />
        <Menu />
      </header>
      <Ribbon />
      <div className="flex-1 min-h-0 flex">
        <SymbolPanel />
        <Workspace />
        <Rail />
        <ThemePanel />
      </div>
      <StatusBar />
      <svg className="absolute right-[157px] top-[166px] pointer-events-none" width="170" height="84" viewBox="0 0 170 84" stroke="#f00" fill="#f00">
        <path d="M1 82L101 5M144 2l22 46" />
        <path d="M101 5L87 9l8 10zM170 56l-11-10 11-6z" />
      </svg>
    </div>
  );
}
